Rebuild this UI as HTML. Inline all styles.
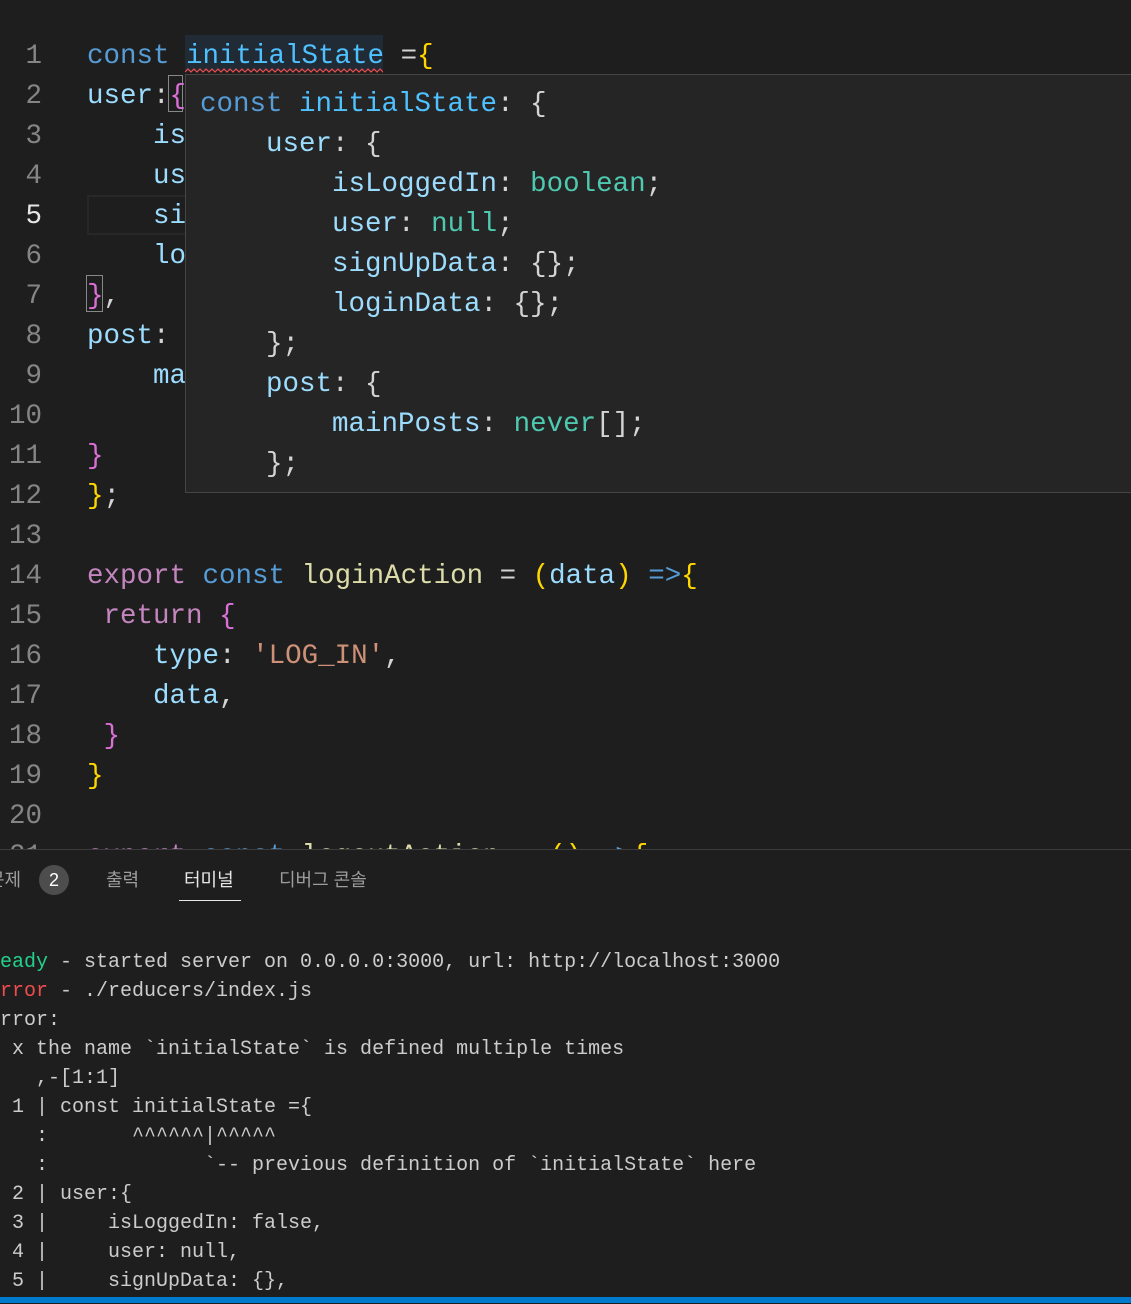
<!DOCTYPE html>
<html><head><meta charset="utf-8"><style>
body{margin:0;width:1131px;height:1303px;background:#1e1e1e;overflow:hidden;position:relative;font-family:"Liberation Mono",monospace}
.l{position:absolute;white-space:pre;font-size:27.5px;line-height:40px;height:40px;color:#9cdcfe}
.n{position:absolute;left:0;width:42px;text-align:right;font-size:27.5px;line-height:40px;color:#858585;font-family:"Liberation Mono",monospace}
.k{color:#569cd6}.c{color:#4fc1ff}.p{color:#d4d4d4}.t{color:#4ec9b0}.f{color:#dcdcaa}.m{color:#c586c0}.s{color:#ce9178}.y{color:#ffd700}.pk{color:#da70d6}.b{color:#179fff}
.t2{position:absolute;left:-12px;white-space:pre;font-size:20px;line-height:29px;color:#cccccc}
.ed{position:absolute;left:0;top:2px;width:1131px;height:847px}
</style></head><body>
<div style="position:absolute;left:87px;top:195px;width:110px;height:36px;border:2px solid #282828"></div>
<div style="position:absolute;left:185px;top:35px;width:198px;height:36px;background:#264f78;opacity:.28"></div>
<svg style="position:absolute;left:185px;top:68px" width="198" height="6"><path d="M0 4 l3 -3 l3 3 l3 -3 l3 3 l3 -3 l3 3 l3 -3 l3 3 l3 -3 l3 3 l3 -3 l3 3 l3 -3 l3 3 l3 -3 l3 3 l3 -3 l3 3 l3 -3 l3 3 l3 -3 l3 3 l3 -3 l3 3 l3 -3 l3 3 l3 -3 l3 3 l3 -3 l3 3 l3 -3 l3 3 l3 -3 l3 3 l3 -3 l3 3 l3 -3 l3 3 l3 -3 l3 3 l3 -3 l3 3 l3 -3 l3 3 l3 -3 l3 3 l3 -3 l3 3 l3 -3 l3 3 l3 -3 l3 3 l3 -3 l3 3 l3 -3 l3 3 l3 -3 l3 3 l3 -3 l3 3 l3 -3 l3 3 l3 -3 l3 3 l3 -3 l3 3 l3 -3 l3 3" stroke="#f14c4c" fill="none" stroke-width="1.2"/></svg>
<div style="position:absolute;left:168px;top:75px;width:15px;height:37px;border:1px solid #888;box-sizing:border-box"></div>
<div style="position:absolute;left:86px;top:275px;width:17px;height:37px;border:1px solid #888;box-sizing:border-box"></div>

<div class="ed">
<div class="n" style="top:35px">1</div><div class="n" style="top:75px">2</div><div class="n" style="top:115px">3</div><div class="n" style="top:155px">4</div><div class="n" style="top:195px;color:#e6e6e6">5</div><div class="n" style="top:235px">6</div><div class="n" style="top:275px">7</div><div class="n" style="top:315px">8</div><div class="n" style="top:355px">9</div><div class="n" style="top:395px">10</div><div class="n" style="top:435px">11</div><div class="n" style="top:475px">12</div><div class="n" style="top:515px">13</div><div class="n" style="top:555px">14</div><div class="n" style="top:595px">15</div><div class="n" style="top:635px">16</div><div class="n" style="top:675px">17</div><div class="n" style="top:715px">18</div><div class="n" style="top:755px">19</div><div class="n" style="top:795px">20</div><div class="n" style="top:835px">21</div>

<div class="l" style="left:87px;top:35px"><span class="k">const</span> <span class="c">initialState</span> <span class="p">=</span><span class="y">{</span></div>
<div class="l" style="left:87px;top:75px">user<span class="p">:</span><span class="pk">{</span></div>
<div class="l" style="left:87px;top:115px">    is</div>
<div class="l" style="left:87px;top:155px">    us</div>
<div class="l" style="left:87px;top:195px">    si</div>
<div class="l" style="left:87px;top:235px">    lo</div>
<div class="l" style="left:87px;top:275px"><span class="pk">}</span><span class="p">,</span></div>
<div class="l" style="left:87px;top:315px">post<span class="p">:</span></div>
<div class="l" style="left:87px;top:355px">    ma</div>
<div class="l" style="left:87px;top:435px"><span class="pk">}</span></div>
<div class="l" style="left:87px;top:475px"><span class="y">}</span><span class="p">;</span></div>
<div class="l" style="left:87px;top:555px"><span class="m">export</span> <span class="k">const</span> <span class="f">loginAction</span> <span class="p">=</span> <span class="y">(</span>data<span class="y">)</span> <span class="k">=&gt;</span><span class="y">{</span></div>
<div class="l" style="left:87px;top:595px"> <span class="m">return</span> <span class="pk">{</span></div>
<div class="l" style="left:87px;top:635px">    type<span class="p">:</span> <span class="s">'LOG_IN'</span><span class="p">,</span></div>
<div class="l" style="left:87px;top:675px">    data<span class="p">,</span></div>
<div class="l" style="left:87px;top:715px"> <span class="pk">}</span></div>
<div class="l" style="left:87px;top:755px"><span class="y">}</span></div>
<div class="l" style="left:87px;top:835px"><span class="m">export</span> <span class="k">const</span> <span class="f">logoutAction</span> <span class="p">=</span> <span class="y">()</span> <span class="k">=&gt;</span><span class="y">{</span></div>
</div>

<div style="position:absolute;left:185px;top:74px;width:946px;height:419px;background:#252526;border:1px solid #454545;border-right:none;box-sizing:border-box;overflow:hidden">
<div class="l" style="left:14px;top:10px"><span class="k">const</span> <span class="c">initialState</span><span class="p">: {</span></div>
<div class="l" style="left:14px;top:50px">    user<span class="p">: {</span></div>
<div class="l" style="left:14px;top:90px">        isLoggedIn<span class="p">:</span> <span class="t">boolean</span><span class="p">;</span></div>
<div class="l" style="left:14px;top:130px">        user<span class="p">:</span> <span class="t">null</span><span class="p">;</span></div>
<div class="l" style="left:14px;top:170px">        signUpData<span class="p">: {};</span></div>
<div class="l" style="left:14px;top:210px">        loginData<span class="p">: {};</span></div>
<div class="l" style="left:14px;top:250px"><span class="p">    };</span></div>
<div class="l" style="left:14px;top:290px">    post<span class="p">: {</span></div>
<div class="l" style="left:14px;top:330px">        mainPosts<span class="p">:</span> <span class="t">never</span><span class="p">[];</span></div>
<div class="l" style="left:14px;top:370px"><span class="p">    };</span></div>
</div>

<div style="position:absolute;left:0;top:849px;width:1131px;height:454px;background:#1e1e1e;border-top:1px solid #3c3c3c"></div>
<div style="position:absolute;left:-12px;top:866px;font-family:'Liberation Sans','Noto Sans CJK KR',sans-serif;font-size:18px;color:#9d9d9d;line-height:28px">문제</div>
<div style="position:absolute;left:39px;top:865px;width:30px;height:30px;border-radius:15px;background:#4d4d4d;color:#fff;font-family:'Liberation Sans',sans-serif;font-size:18px;text-align:center;line-height:30px">2</div>
<div style="position:absolute;left:106px;top:866px;font-family:'Liberation Sans','Noto Sans CJK KR',sans-serif;font-size:18px;color:#9d9d9d;line-height:28px">출력</div>
<div style="position:absolute;left:184px;top:866px;font-family:'Liberation Sans','Noto Sans CJK KR',sans-serif;font-size:18px;color:#e7e7e7;line-height:28px">터미널</div>
<div style="position:absolute;left:179px;top:900px;width:62px;height:1px;background:#e7e7e7"></div>
<div style="position:absolute;left:279px;top:866px;font-family:'Liberation Sans','Noto Sans CJK KR',sans-serif;font-size:18px;color:#9d9d9d;line-height:28px">디버그 콘솔</div>

<div class="t2" style="top:948px"><span style="color:#23d18b">ready</span> - started server on 0.0.0.0:3000, url: http://localhost:3000</div>
<div class="t2" style="top:977px"><span style="color:#f14c4c">error</span> - ./reducers/index.js</div>
<div class="t2" style="top:1006px">Error:</div>
<div class="t2" style="top:1035px">  x the name `initialState` is defined multiple times</div>
<div class="t2" style="top:1064px">    ,-[1:1]</div>
<div class="t2" style="top:1093px">  1 | const initialState ={</div>
<div class="t2" style="top:1122px">    :       ^^^^^^|^^^^^</div>
<div class="t2" style="top:1151px">    :             `-- previous definition of `initialState` here</div>
<div class="t2" style="top:1180px">  2 | user:{</div>
<div class="t2" style="top:1209px">  3 |     isLoggedIn: false,</div>
<div class="t2" style="top:1238px">  4 |     user: null,</div>
<div class="t2" style="top:1267px">  5 |     signUpData: {},</div>
<div style="position:absolute;left:0;top:1297px;width:1131px;height:6px;background:#007acc"></div>
</body></html>
